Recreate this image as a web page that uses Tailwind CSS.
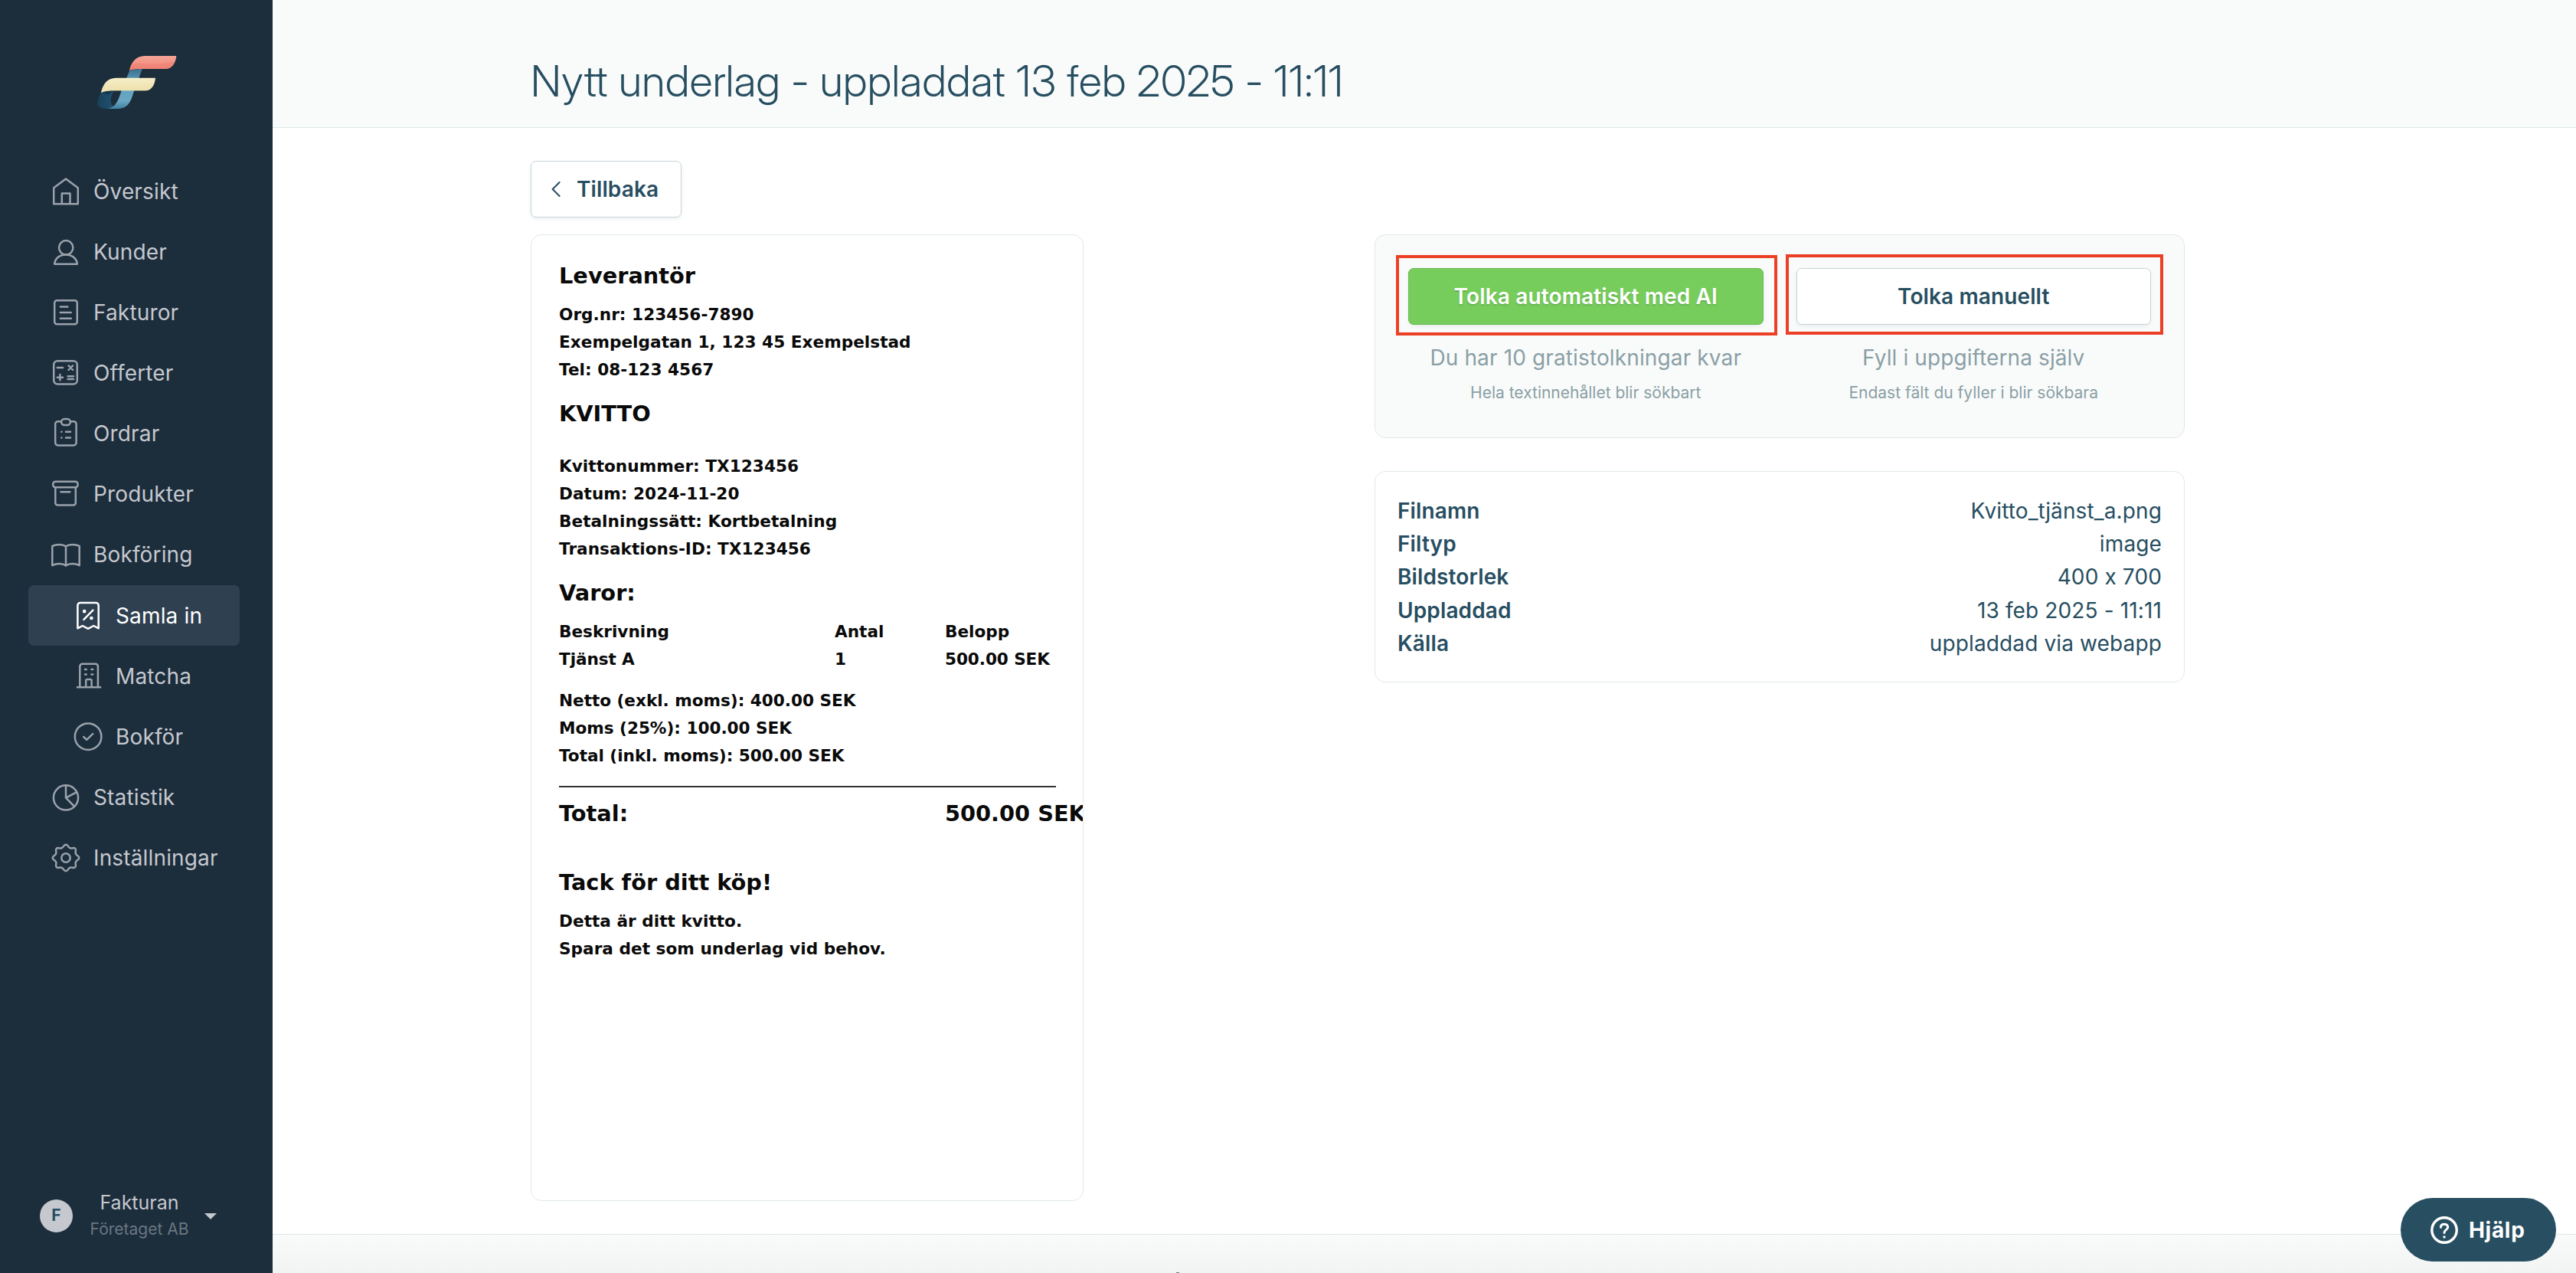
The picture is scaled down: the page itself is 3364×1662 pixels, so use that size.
<!DOCTYPE html>
<html lang="sv">
<head>
<meta charset="utf-8">
<title>Nytt underlag</title>
<script src="https://cdn.jsdelivr.net/npm/@tailwindcss/browser@4"></script>
</head>
<body class="relative flex h-[1662px] w-[3364px] overflow-hidden bg-white font-['Inter',sans-serif] text-[28px] text-[#274e61]">

<aside class="relative flex w-[356px] shrink-0 flex-col bg-[#1c2d3c] pt-[65px]">
  <svg class="ml-[120px] h-[85px] w-[120px] shrink-0" viewBox="0 0 360 255">
    <defs>
      <linearGradient id="coral" x1="0" y1="0" x2="0" y2="1"><stop offset="0" stop-color="#f6a596"/><stop offset="1" stop-color="#ee8274"/></linearGradient>
      <linearGradient id="cream" x1="0" y1="0" x2="0" y2="1"><stop offset="0" stop-color="#f7eec8"/><stop offset="1" stop-color="#eadfa8"/></linearGradient>
      <linearGradient id="stem" x1="0" y1="0" x2="0" y2="1"><stop offset="0" stop-color="#3a6d8a"/><stop offset=".3" stop-color="#5b9aba"/><stop offset=".8" stop-color="#6aa8c6"/><stop offset="1" stop-color="#3f7f9c"/></linearGradient>
      <linearGradient id="loop" x1="0" y1="0" x2="1" y2="0"><stop offset="0" stop-color="#19415a"/><stop offset="1" stop-color="#205270"/></linearGradient>
    </defs>
    <path fill="url(#loop)" d="M36 166C27 187 22 200 22 211C22 225 34 231 62 231C76 230 83 226 86 221C70 215 70 190 86 158Z"/>
    <path fill="#15374d" d="M36 167L86 158L66 176Z"/>
    <path fill="url(#stem)" d="M148 80L198 73L163 168C152 205 140 231 102 231H62C96 224 104 196 115 162Z"/>
    <path fill="url(#coral)" d="M147 81C152 50 174 24 206 24H331C329 48 317 74 291 75H200C180 75 160 75 147 81Z"/>
    <path fill="#ee7f73" opacity=".55" d="M147 81C155 62 165 50 190 53C225 60 285 55 325 45C319 62 308 74 291 75H200C180 75 160 75 147 81Z"/>
    <path fill="url(#cream)" d="M36 168C42 135 60 110 95 110H249C247 135 235 160 209 160H90C70 160 50 161 36 168Z"/>
    <path fill="#eee2b0" opacity=".7" d="M36 168C44 150 60 140 85 142C130 147 190 146 242 132C236 150 226 160 209 160H90C70 160 50 161 36 168Z"/>
  </svg>

  <nav class="mt-[60px] ml-[37px] w-[276px] text-[#c5c8ce] tracking-[0.15px] [&_svg]:h-10 [&_svg]:w-10 [&_svg]:shrink-0 [&_svg]:overflow-visible [&_svg]:fill-none [&_svg]:stroke-[#9aa2aa] [&_svg]:stroke-[2.5px]">
    <a class="flex h-[79.15px] items-center gap-4 pl-[29px]"><svg viewBox="0 0 40 40" stroke-linejoin="round"><path d="M20 3.4L35.8 15.3V36.2H4.2V15.3ZM14.8 36.2V22.6H25.5V36.2"/></svg>Översikt</a>
    <a class="flex h-[79.15px] items-center gap-4 pl-[29px]"><svg viewBox="0 0 40 40" stroke-linejoin="round"><circle cx="20.2" cy="14.3" r="9.2"/><path d="M5.2 35.7H34.8C34.2 28.2 28 23.5 20 23.5S5.8 28.2 5.2 35.7Z"/></svg>Kunder</a>
    <a class="flex h-[79.15px] items-center gap-4 pl-[29px]"><svg viewBox="0 0 40 40" stroke-linecap="round"><rect x="5.2" y="4.3" width="29.6" height="31" rx="3.2"/><path d="M12.8 12.4H22.4M12.8 20.1H26.8M12.8 27.8H26.8"/></svg>Fakturor</a>
    <a class="flex h-[79.15px] items-center gap-4 pl-[29px]"><svg viewBox="0 0 40 40" stroke-linecap="round"><rect x="4.2" y="4.2" width="30.6" height="30.4" rx="5"/><path d="M8.8 13H16M23.6 10.4L29 15.8M29 10.4L23.6 15.8M8.8 25.7H16M12.4 22.1V29.3M22.6 24.2H30M22.6 28H30"/></svg>Offerter</a>
    <a class="flex h-[79.15px] items-center gap-4 pl-[29px]"><svg viewBox="0 0 40 40" stroke-linecap="round"><path d="M13.6 4.2H9.6A3.4 3.4 0 0 0 6.2 7.6V32A3.4 3.4 0 0 0 9.6 35.4H30.2A3.4 3.4 0 0 0 33.6 32V7.6A3.4 3.4 0 0 0 30.2 4.2H26.4"/><rect x="14.1" y="1" width="11.8" height="8" rx="4"/><path d="M14.3 17.8H14.4M20 17.8H26M14.3 25.5H14.4M20 25.5H26"/></svg>Ordrar</a>
    <a class="flex h-[79.15px] items-center gap-4 pl-[29px]"><svg viewBox="0 0 40 40" stroke-linecap="round"><rect x="3.2" y="3.8" width="32.4" height="7.4" rx="3.2"/><path d="M6.3 11.2V31.4A3 3 0 0 0 9.3 34.4H29.8A3 3 0 0 0 32.8 31.4V11.2M13.4 17.3H25.4"/></svg>Produkter</a>
    <a class="flex h-[79.15px] items-center gap-4 pl-[29px]"><svg viewBox="0 0 40 40" stroke-linejoin="round"><path d="M20 9.3C15.5 6.2 8 6.2 2.3 8.8V34.2C8 31.2 15.5 31.2 20 34.4C24.5 31.2 32 31.2 37.7 34.2V8.8C32 6.2 24.5 6.2 20 9.3ZM20 9.3V34"/></svg>Bokföring</a>
    <a class="flex h-[79.15px] items-center gap-4 rounded-[7px] bg-[#2f4050] pl-[58px] text-white [&_svg]:!stroke-white"><svg viewBox="0 0 40 40" stroke-linejoin="round" stroke-linecap="round"><path d="M6.4 36.3V6.4A3.4 3.4 0 0 1 9.8 3H30.3A3.4 3.4 0 0 1 33.7 6.4V36.3L27.2 33L20 36.8L12.8 33ZM14.4 24.8L26.4 12.6"/><circle cx="15.2" cy="14.2" r="1.1"/><circle cx="24.4" cy="23" r="1.1"/></svg>Samla in</a>
    <a class="flex h-[79.15px] items-center gap-4 pl-[58px]"><svg viewBox="0 0 40 40" stroke-linecap="round"><path d="M5.9 34.2H36.1M9.3 34V7A3.2 3.2 0 0 1 12.5 3.8H29.7A3.2 3.2 0 0 1 32.9 7V34M17.2 34V25.4A1.4 1.4 0 0 1 18.6 24H23.2A1.4 1.4 0 0 1 24.6 25.4V34M16 11H17.8M24.4 11H26.2M16 17.6H17.8M24.4 17.6H26.2"/></svg>Matcha</a>
    <a class="flex h-[79.15px] items-center gap-4 pl-[58px]"><svg viewBox="0 0 40 40" stroke-linecap="round" stroke-linejoin="round"><circle cx="20.1" cy="19.7" r="17.3"/><path d="M14.2 20L18.2 23.8L26.2 16.2"/></svg>Bokför</a>
    <a class="flex h-[79.15px] items-center gap-4 pl-[29px]"><svg viewBox="0 0 40 40"><circle cx="20" cy="20.4" r="16.1"/><path d="M20 4.3V20.6L31.2 32M20 20.6L34.2 13.2"/></svg>Statistik</a>
    <a class="flex h-[79.15px] items-center gap-4 pl-[29px]"><svg viewBox="0 0 40 40" stroke-linecap="round"><defs><path id="tooth" d="M14.64 7.07C17.6 5.84 17.2 2.7 20 2.7C22.8 2.7 22.4 5.84 25.36 7.07"/></defs><use href="#tooth"/><use href="#tooth" transform="rotate(45 20 20)"/><use href="#tooth" transform="rotate(90 20 20)"/><use href="#tooth" transform="rotate(135 20 20)"/><use href="#tooth" transform="rotate(180 20 20)"/><use href="#tooth" transform="rotate(225 20 20)"/><use href="#tooth" transform="rotate(270 20 20)"/><use href="#tooth" transform="rotate(315 20 20)"/><circle cx="20" cy="20" r="5.7"/></svg>Inställningar</a>
  </nav>

  <div class="mt-auto mb-[40px] flex h-[70px] items-center pl-[52px] text-[#c5c8ce]">
    <span class="flex h-[43px] w-[43px] shrink-0 items-center justify-center rounded-full bg-[#c5c8ce] text-[21px] font-bold text-[#274e61]">F</span>
    <div class="ml-[23px] w-[128px] text-center">
      <div class="-mx-2 text-[25px] leading-[36px]">Fakturan</div>
      <div class="-mx-2 text-[21px] leading-[34px] whitespace-nowrap text-[#6b7781]">Företaget AB</div>
    </div>
    <svg class="mt-[2px] ml-[21px] h-2 w-4" viewBox="0 0 16 8"><path fill="#c5c8ce" d="M0 0H16L8 8Z"/></svg>
  </div>
</aside>

<main class="flex min-w-0 flex-1 flex-col">
  <header class="h-[167px] border-b border-[#dfe8e9] bg-[#f9fbfa] pl-[337px] pt-[72px]">
    <h1 class="w-max font-['Inter_Display','Inter',sans-serif] text-[56px] leading-[68px] font-light tracking-[0.43px]">Nytt underlag - uppladdat 13 feb 2025 - 11:11</h1>
  </header>

  <div class="w-[2497px] pt-[43px] pb-[43px] pl-[337px]">
    <button class="flex h-[74px] w-[197px] items-center rounded-[7px] border border-[#c6d4d8] bg-white pl-[26px] font-semibold tracking-[0.1px] shadow-[0_2px_4px_rgba(39,78,97,0.08)]">
      <svg class="h-5 w-[12px] fill-none stroke-[#274e61] stroke-2" viewBox="0 0 12 20" stroke-linecap="round" stroke-linejoin="round"><path d="M10.6 1L1.6 10L10.6 19"/></svg>
      <span class="ml-[21px]">Tillbaka</span>
    </button>

    <div class="mt-[22px] flex items-start justify-between">
      <section class="h-[1262px] w-[722px] overflow-hidden rounded-[14px] border border-[#e1e9e9] bg-white pl-9 pt-[35px] font-['DejaVu_Sans',sans-serif] text-[21.6px] leading-[36px] font-bold whitespace-nowrap text-[#0a0a0a]">
        <h2 class="text-[28.8px]">Leverantör</h2>
        <div class="mt-[15px] tracking-[0.03px]"><p>Org.nr: 123456-7890</p><p>Exempelgatan 1, 123 45 Exempelstad</p><p>Tel: 08-123 4567</p></div>
        <h2 class="mt-[21px] text-[28.8px]">KVITTO</h2>
        <div class="mt-[33px] tracking-[0.03px]"><p>Kvittonummer: TX123456</p><p>Datum: 2024-11-20</p><p>Betalningssätt: Kortbetalning</p><p>Transaktions-ID: TX123456</p></div>
        <h2 class="mt-[21px] text-[28.8px]">Varor:</h2>
        <div class="mt-[15px] grid grid-cols-[360px_144px_1fr]"><span>Beskrivning</span><span>Antal</span><span>Belopp</span><span class="tracking-[-0.1px]">Tjänst A</span><span>1</span><span class="tracking-[-0.1px]">500.00 SEK</span></div>
        <div class="mt-[18px] tracking-[-0.03px]"><p>Netto (exkl. moms): 400.00 SEK</p><p>Moms (25%): 100.00 SEK</p><p>Total (inkl. moms): 500.00 SEK</p></div>
        <div class="mt-[21px] h-[2px] w-[649px] bg-[#333]"></div>
        <div class="mt-[16px] grid grid-cols-[504px_1fr] text-[28.8px]"><span>Total:</span><span>500.00 SEK</span></div>
        <h2 class="mt-[54px] text-[28.8px]">Tack för ditt köp!</h2>
        <div class="mt-[15px] tracking-[0.03px]"><p>Detta är ditt kvitto.</p><p>Spara det som underlag vid behov.</p></div>
      </section>

      <div class="w-[1058px]">
        <section class="relative grid h-[266px] grid-cols-2 content-start gap-x-[43px] rounded-[14px] border border-[#dfe8e9] bg-[#f9fbfa] px-[43px] pt-[43px] text-center text-[#8a9fa6]">
          <div class="flex flex-col whitespace-nowrap">
            <button class="h-[74px] rounded-[7px] border border-[#69b952] bg-[#76cd5c] font-semibold tracking-[0.15px] text-white shadow-[0_2px_4px_rgba(39,78,97,0.08)] [text-shadow:0_2px_2px_rgba(0,0,0,0.14)]">Tolka automatiskt med AI</button>
            <p class="mt-[22px] leading-[43px] tracking-[0.13px]">Du har 10 gratistolkningar kvar</p>
            <p class="mt-2 text-[21px] leading-[32px]">Hela textinnehållet blir sökbart</p>
          </div>
          <div class="flex flex-col whitespace-nowrap">
            <button class="h-[74px] rounded-[7px] border border-[#c6d4d8] bg-white font-semibold tracking-[0.12px] text-[#274e61] shadow-[0_2px_4px_rgba(39,78,97,0.08)]">Tolka manuellt</button>
            <p class="mt-[22px] leading-[43px] tracking-[0.1px]">Fyll i uppgifterna själv</p>
            <p class="mt-2 text-[21px] leading-[32px]">Endast fält du fyller i blir sökbara</p>
          </div>
          <div class="absolute top-[26px] left-[27px] h-[105px] w-[498px] border-4 border-[#ec4026]"></div>
          <div class="absolute top-[25px] left-[536px] h-[105px] w-[493px] border-4 border-[#ec4026]"></div>
        </section>

        <dl class="mt-[43px] h-[276px] rounded-[14px] border border-[#e1e9e9] px-[29px] pt-[30px] leading-[43.2px] tracking-[0.13px] [&_dt]:font-semibold [&>div]:flex [&>div]:justify-between">
          <div><dt>Filnamn</dt><dd>Kvitto_tjänst_a.png</dd></div>
          <div><dt>Filtyp</dt><dd>image</dd></div>
          <div><dt>Bildstorlek</dt><dd>400 x 700</dd></div>
          <div><dt>Uppladdad</dt><dd>13 feb 2025 - 11:11</dd></div>
          <div><dt>Källa</dt><dd>uppladdad via webapp</dd></div>
        </dl>
      </div>
    </div>
  </div>

  <footer class="relative flex-1 border-t border-[#e1e7e8] bg-linear-to-b from-[#f9fbfa] to-[#f2f4f3]">
    <div class="absolute bottom-0 left-[1180px] h-px w-1 bg-[#777]"></div>
  </footer>
</main>

<button class="absolute top-[1564px] left-[3135px] flex h-[83px] w-[203px] items-center rounded-full bg-[#274e61] pl-[39px] font-bold tracking-[0.7px] text-white">
  <svg class="h-9 w-9 fill-none stroke-white" viewBox="0 0 36 36" stroke-linecap="round"><circle cx="18" cy="18" r="16.2" stroke-width="3.4"/><path stroke-width="3" d="M13.4 14.2C13.4 11.6 15.4 10.2 18 10.2S22.7 11.7 22.7 14.2C22.7 17.4 18 17.6 18 21.6"/><circle cx="18" cy="27" r="1.7" fill="white" stroke="none"/></svg>
  <span class="ml-[14px]">Hjälp</span>
</button>
</body>
</html>
